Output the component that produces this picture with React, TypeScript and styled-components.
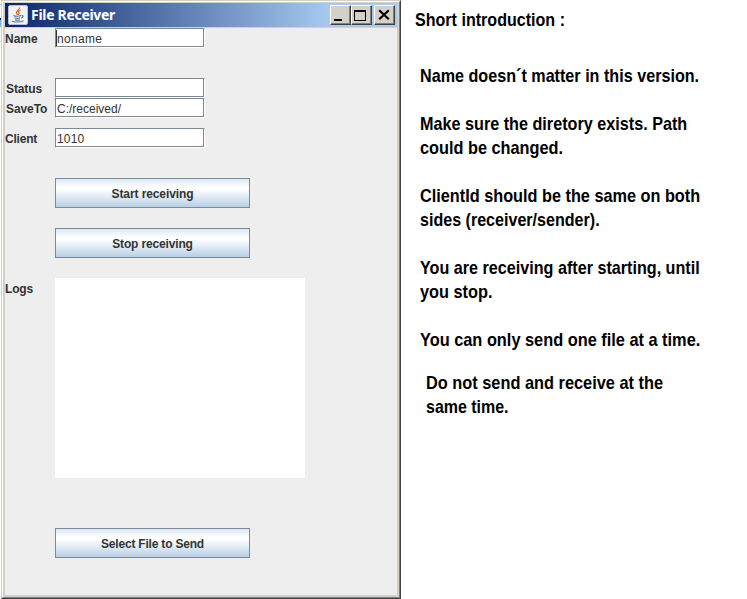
import React from "react";
import styled, { createGlobalStyle } from "styled-components";

const Global = createGlobalStyle`
  * { box-sizing: border-box; }
  body { margin: 0; background: #fff; overflow: hidden; }
`;

const Page = styled.div`
  display: flex;
  width: 747px;
  height: 599px;
  background: #fff;
  font-family: "Liberation Sans", Arial, sans-serif;
`;

const Backdrop = styled.div`
  width: 1px;
  flex: none;
  background: linear-gradient(
    #fff 4px, #d4d0c8 4px 5px, #fff 5px 18px, #0a246a 18px 20px,
    #7ab0f0 20px 27px, #fff 27px 41px, #d4d0c8 41px 42px, #fff 42px
  );
`;

const Frame = styled.section`
  width: 400px;
  height: 599px;
  flex: none;
  border: 1px solid;
  border-color: #d4d0c8 #404040 #404040 #d4d0c8;
`;

const Bevel = styled.div`
  display: flex;
  flex-direction: column;
  height: 597px;
  padding: 0 2px 2px;
  background: #d4d0c8;
  border: 1px solid;
  border-color: #fff #808080 #808080 #fff;
`;

const TitleBar = styled.header`
  display: flex;
  align-items: center;
  flex: none;
  height: 25px;
  margin: 1px 0 0;
  padding: 0 2px 0 3px;
  border-bottom: 1px solid #d4d0c8;
  background: linear-gradient(90deg, #0a246a, #a6caf0 325px);
`;

const Title = styled.h1`
  flex: 1;
  margin: 0 0 0 3px;
  color: #fff;
  font: bold 14px/22px "Noto Sans", Tahoma, sans-serif;
  letter-spacing: -0.3px;
  white-space: pre;
`;

const WinButton = styled.button<{ $gap?: number }>`
  display: block;
  width: 21px;
  height: 20px;
  margin: 0 0 0 ${(p) => p.$gap ?? 0}px;
  padding: 0;
  border: 1px solid;
  border-color: #fff #404040 #404040 #fff;
  background: #d4d0c8;
  box-shadow: inset -1px -1px #808080;
  svg { display: block; }
`;

const Panel = styled.main`
  display: flex;
  flex-direction: column;
  flex: 1;
  background: #eee;
`;

const Row = styled.div<{ $before?: number }>`
  display: grid;
  grid-template-columns: 50px auto;
  justify-content: start;
  margin-top: ${(p) => p.$before ?? 0}px;
`;

const Label = styled.label<{ $indent?: number; $track?: number }>`
  padding-left: ${(p) => p.$indent ?? 0}px;
  color: #333;
  font-size: 12px;
  font-weight: bold;
  line-height: 22px;
  height: 20px;
  letter-spacing: ${(p) => p.$track ?? 0}px;
  white-space: nowrap;
`;

const Field = styled.div`
  display: flex;
  width: 150px;
  height: 20px;
  border: 1px solid;
  border-color: #7a8a99 #fff #fff #7a8a99;
  background: #fff;
  box-shadow: inset -1px -1px #7a8a99;
  padding-left: 1px;
  color: #333;
  font-size: 12px;
  line-height: 20px;
`;

const Caret = styled.i`
  width: 1px;
  height: 16px;
  margin: 1px 0 0 -1px;
  background: #333;
`;

const FieldText = styled.span<{ $track?: number }>`
  letter-spacing: ${(p) => p.$track ?? 0}px;
`;

const Action = styled.button<{ $before: number; $track?: number }>`
  display: block;
  width: 195px;
  height: 30px;
  flex: none;
  margin: ${(p) => p.$before}px 0 0 50px;
  padding: 1px 0 0;
  border: 1px solid #7a8a99;
  background: linear-gradient(#dde8f3 0%, #fff 30%, #fff 36%, #b8cfe5 100%);
  color: #333;
  font: bold 12px/28px "Liberation Sans", Arial, sans-serif;
  letter-spacing: ${(p) => p.$track ?? 0}px;
`;

const LogArea = styled.div`
  width: 250px;
  height: 200px;
  background: #fff;
`;

const Notes = styled.aside`
  flex: 1;
  padding: 8px 0 0 14px;
  color: #000;
  font: bold 19px/24px "Liberation Sans", Arial, sans-serif;
`;

const Note = styled.p<{ $before?: number; $indent?: number }>`
  margin: ${(p) => p.$before ?? 24}px 0 0 ${(p) => p.$indent ?? 5}px;
`;

/* Condensed line: the regular-width face narrowed horizontally. */
const Line = styled.span<{ $narrow?: number }>`
  display: block;
  width: max-content;
  white-space: pre;
  transform: scaleX(${(p) => p.$narrow ?? 0.852});
  transform-origin: 0 50%;
`;

const JavaIcon = () => (
  <svg width="20" height="20" viewBox="0 0 20 20" fill="none">
    <rect x="0.5" y="0.5" width="19" height="19" rx="1.5" fill="#f2f2f2" stroke="#b9c0ce" />
    <path d="M11.5 2.500C12 5 7.500 5.800 8.500 8.200L9.500 9.800M12.500 5C10 6.300 10 7 11 8.200L10 10" stroke="#e2702c" strokeWidth="1.300" />
    <path d="M5.500 10.500C7 11.500 11 11.500 13 10.500M6.500 12.800C8.500 13.600 10.500 13.500 12 12.800M13.500 10.500C16 10.300 15.500 12.500 13 13M7 14.700C8.500 15.300 10.500 15.300 12 14.700M4 15.700C5 17.500 13 17.500 15.500 15.700" stroke="#58799b" strokeWidth="1.100" />
  </svg>
);

export default function App() {
  return (
    <>
      <Global />
      <Page>
        <Backdrop />
        <Frame>
          <Bevel>
            <TitleBar>
              <JavaIcon />
              <Title>File Receiver</Title>
              <WinButton aria-label="Minimize">
                <svg width="19" height="18"><path d="M3 13h8v2H3z" /></svg>
              </WinButton>
              <WinButton aria-label="Maximize">
                <svg width="19" height="18" shapeRendering="crispEdges">
                  <path fillRule="evenodd" d="M2 4h12v11H2zM3 6v8h10V6z" />
                </svg>
              </WinButton>
              <WinButton aria-label="Close" $gap={2}>
                <svg width="19" height="18">
                  <path d="M4.200 4.200l9.600 9M13.800 4.200l-9.600 9" stroke="#000" strokeWidth="2.200" />
                </svg>
              </WinButton>
            </TitleBar>
            <Panel>
              <Row>
                <Label>Name</Label>
                <Field><Caret /><FieldText $track={0.3}>noname</FieldText></Field>
              </Row>
              <Row $before={30}>
                <Label $indent={1} $track={-0.1}>Status</Label>
                <Field />
              </Row>
              <Row>
                <Label $indent={1} $track={-0.1}>SaveTo</Label>
                <Field><FieldText>C:/received/</FieldText></Field>
              </Row>
              <Row $before={10}>
                <Label $track={-0.2}>Client</Label>
                <Field><FieldText $track={0.2}>1010</FieldText></Field>
              </Row>
              <Action $before={30} $track={-0.1}>Start receiving</Action>
              <Action $before={20} $track={-0.15}>Stop receiving</Action>
              <Row $before={20}>
                <Label $track={-0.2}>Logs</Label>
                <LogArea />
              </Row>
              <Action $before={50} $track={-0.2}>Select File to Send</Action>
            </Panel>
          </Bevel>
        </Frame>
        <Notes>
          <Line $narrow={0.846}>Short introduction :</Line>
          <Note $before={32}><Line $narrow={0.85}>Name doesn´t matter in this version.</Line></Note>
          <Note>
            <Line>Make sure the diretory exists. Path</Line>
            <Line $narrow={0.857}>could be changed.</Line>
          </Note>
          <Note>
            <Line $narrow={0.856}>ClientId should be the same on both</Line>
            <Line $narrow={0.846}>sides (receiver/sender).</Line>
          </Note>
          <Note>
            <Line $narrow={0.85}>You are receiving after starting, until</Line>
            <Line $narrow={0.858}>you stop.</Line>
          </Note>
          <Note><Line $narrow={0.86}>You can only send one file at a time.</Line></Note>
          <Note $before={19} $indent={11}>
            <Line $narrow={0.86}>Do not send and receive at the</Line>
            <Line $narrow={0.84}>same time.</Line>
          </Note>
        </Notes>
      </Page>
    </>
  );
}
